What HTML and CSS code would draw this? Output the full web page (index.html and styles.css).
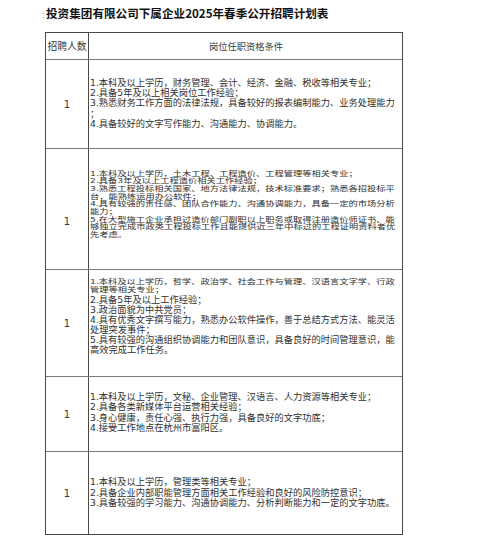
FILE: index.html
```html
<!DOCTYPE html>
<html lang="zh-CN">
<head>
<meta charset="utf-8">
<title>投资集团有限公司下属企业2025年春季公开招聘计划表</title>
<link rel="stylesheet" href="styles.css">
</head>
<body>
<div class="page">
  <h1 class="title"><span class="mark">:</span>投资集团有限公司下属企业2025年春季公开招聘计划表</h1>
  <div class="table">
    <div class="row row-head">
      <div class="cell count head">招聘人数</div>
      <div class="cell req head">岗位任职资格条件</div>
    </div>
    <div class="row row-1">
      <div class="cell count">1</div>
      <div class="cell req">
        <div class="ln">1.本科及以上学历，财务管理、会计、经济、金融、税收等相关专业；</div>
        <div class="ln">2.具备5年及以上相关岗位工作经验；</div>
        <div class="ln">3.熟悉财务工作方面的法律法规，具备较好的报表编制能力、业务处理能力</div>
        <div class="ln">；</div>
        <div class="ln">4.具备较好的文字写作能力、沟通能力、协调能力。</div>
      </div>
    </div>
    <div class="row row-2">
      <div class="cell count">1</div>
      <div class="cell req">
        <div class="ln">1.本科及以上学历，土木工程、工程造价、工程管理等相关专业；</div>
        <div class="ln">2.具备3年及以上工程造价相关工作经验；</div>
        <div class="ln">3.熟悉工程投标相关国家、地方法律法规，技术标准要求；熟悉各招投标平</div>
        <div class="ln">台，能熟练运用办公软件；</div>
        <div class="ln">4.具有较强的责任感、团队合作能力、沟通协调能力，具备一定的市场分析</div>
        <div class="ln">能力；</div>
        <div class="ln">5.在大型施工企业承担过造价部门副职以上职务或取得注册造价师证书、能</div>
        <div class="ln">够独立完成市政类工程投标工作且能提供近三年中标过的工程证明资料者优</div>
        <div class="ln">先考虑。</div>
      </div>
    </div>
    <div class="row row-3">
      <div class="cell count">1</div>
      <div class="cell req">
        <div class="ln squash">1.本科及以上学历，哲学、政治学、社会工作与管理、汉语言文字学、行政</div>
        <div class="ln squash wrap">管理等相关专业；</div>
        <div class="ln">2.具备5年及以上工作经验；</div>
        <div class="ln">3.政治面貌为中共党员；</div>
        <div class="ln">4.具有优秀文字撰写能力，熟悉办公软件操作，善于总结方式方法、能灵活</div>
        <div class="ln">处理突发事件；</div>
        <div class="ln">5.具有较强的沟通组织协调能力和团队意识，具备良好的时间管理意识，能</div>
        <div class="ln">高效完成工作任务。</div>
      </div>
    </div>
    <div class="row row-4">
      <div class="cell count">1</div>
      <div class="cell req">
        <div class="ln">1.本科及以上学历，文秘、企业管理、汉语言、人力资源等相关专业；</div>
        <div class="ln">2.具备各类新媒体平台运营相关经验；</div>
        <div class="ln">3.身心健康，责任心强、执行力强，具备良好的文字功底；</div>
        <div class="ln">4.接受工作地点在杭州市富阳区。</div>
      </div>
    </div>
    <div class="row row-5">
      <div class="cell count">1</div>
      <div class="cell req">
        <div class="ln">1.本科及以上学历，管理类等相关专业；</div>
        <div class="ln">2.具备企业内部职能管理方面相关工作经验和良好的风险防控意识；</div>
        <div class="ln">3.具备较强的学习能力、沟通协调能力、分析判断能力和一定的文字功底。</div>
      </div>
    </div>
  </div>
</div>
</body>
</html>
```

FILE: styles.css
```css
html, body {
  margin: 0;
  padding: 0;
  background: #ffffff;
}

.page {
  width: 500px;
  height: 556px;
  padding-left: 45px;
  box-sizing: border-box;
  font-family: "DejaVu Sans", "Noto Sans CJK SC", sans-serif;
  color: #303030;
}

.title {
  margin: 0 0 0 -3px;
  height: 32px;
  padding-top: 5px;
  box-sizing: border-box;
  font-family: "Noto Sans CJK SC", sans-serif;
  font-size: 11.6px;
  line-height: 16px;
  font-weight: 700;
  color: #111111;
  white-space: nowrap;
}

.mark {
  display: inline-block;
  width: 4px;
  font-family: "DejaVu Sans", sans-serif;
  font-weight: 400;
  font-size: 8px;
  color: #9a9a9a;
}

.table {
  width: 358px;
  border: 1px solid #4a4a4a;
  box-sizing: border-box;
}

.row {
  display: grid;
  grid-template-columns: 43px 1fr;
  box-sizing: border-box;
  border-top: 1px solid #7a7a7a;
}

.row-head { height: 26px; border-top: none; }
.row-1 { height: 89px; }
.row-2 { height: 121px; }
.row-3 { height: 107px; }
.row-4 { height: 75px; }
.row-5 { height: 83px; }

.cell {
  box-sizing: border-box;
}

.count {
  border-right: 1px solid #4a4a4a;
  display: flex;
  align-items: center;
  justify-content: center;
  font-size: 10px;
  color: #333333;
}

.head {
  font-family: "Noto Sans CJK SC", sans-serif;
  font-size: 9.8px;
  color: #3a3a3a;
  display: flex;
  align-items: center;
  justify-content: center;
  white-space: nowrap;
}

.req {
  padding-left: 1px;
  font-size: 9.25px;
  white-space: nowrap;
  display: flex;
  flex-direction: column;
}

.ln {
  height: 10.4px;
  line-height: 10.4px;
}

.row-1 .req { padding-top: 17.5px; }

.row-2 .req { padding-top: 20.5px; }
.row-2 .ln {
  height: 7.7px;
  line-height: 7.7px;
  transform: scaleY(0.76);
  transform-origin: 50% 55%;
}
.row-2 .count { padding-top: 25px; }

.row-3 .req { padding-top: 7px; }
.row-3 .ln { height: 10px; line-height: 10px; }
.row-3 .ln.squash {
  transform: scaleY(0.7);
  transform-origin: 50% 55%;
}
.row-3 .ln.wrap { margin-top: -2.5px; }

.row-4 .req { padding-top: 15.2px; }
.row-4 .ln { height: 10.3px; line-height: 10.3px; }

.row-5 .req { padding-top: 25px; }
.row-5 .ln { height: 10.5px; line-height: 10.5px; }
```
